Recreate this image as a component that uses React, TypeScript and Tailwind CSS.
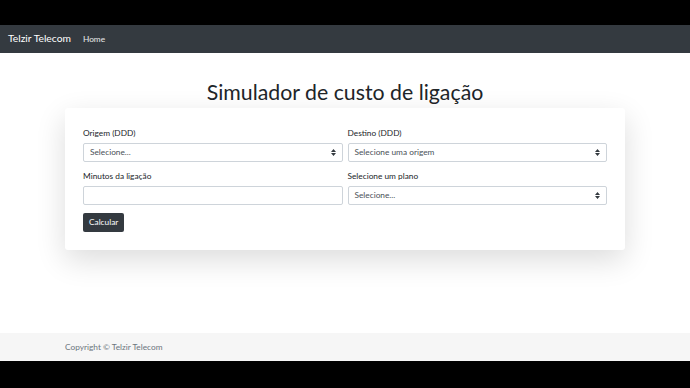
export default function App() {
  const font = { fontFamily: 'Lato, "Noto Sans", sans-serif' };
  return (
    <div style={font} className="flex h-[388px] w-[690px] flex-col bg-black">
      <div className="h-[25px] shrink-0 bg-black" />
      <nav className="flex h-[28px] shrink-0 items-center gap-3 bg-[#343a40] px-2">
        <span className="text-[10.3px] text-white">Telzir Telecom</span>
        <span className="text-[8.3px] text-white/90">Home</span>
      </nav>
      <main className="flex flex-1 flex-col items-center bg-white">
        <h1 className="mt-[25px] text-[21.3px] leading-[28px] text-[#212529]">Simulador de custo de ligação</h1>
        <div className="mt-[2px] w-[560px] rounded-[3px] bg-white px-[18px] pt-[20px] pb-[18px] shadow-[0_10px_30px_rgba(0,0,0,0.14)]">
          <div className="grid grid-cols-2 gap-x-[5px] gap-y-[9px]">
            <Field label="Origem (DDD)" value="Selecione..." select />
            <Field label="Destino (DDD)" value="Selecione uma origem" select />
            <Field label="Minutos da ligação" value="" />
            <Field label="Selecione um plano" value="Selecione..." select />
          </div>
          <button className="mt-[8px] h-[19px] rounded-[2px] bg-[#343a40] px-[6px] text-[8.3px] text-white">Calcular</button>
        </div>
      </main>
      <footer className="flex h-[28px] shrink-0 items-center bg-[#f6f6f6] px-[65px]">
        <span className="text-[8.3px] text-[#6c757d]">Copyright © Telzir Telecom</span>
      </footer>
      <div className="h-[27px] shrink-0 bg-black" />
    </div>
  );
}

function Field({ label, value, select }: { label: string; value: string; select?: boolean }) {
  return (
    <div className="flex flex-col">
      <label className="mb-[4px] text-[8.3px] leading-[11px] text-[#212529]">{label}</label>
      <div className="flex h-[19px] items-center justify-between rounded-[2px] border border-[#ced4da] bg-white px-[6px]">
        <span className="text-[8.3px] text-[#495057]">{value}</span>
        {select && (
          <svg width="5" height="7" viewBox="0 0 5 7">
            <path d="M2.5 0L5 3H0z M2.5 7L0 4h5z" fill="#343a40" />
          </svg>
        )}
      </div>
    </div>
  );
}
